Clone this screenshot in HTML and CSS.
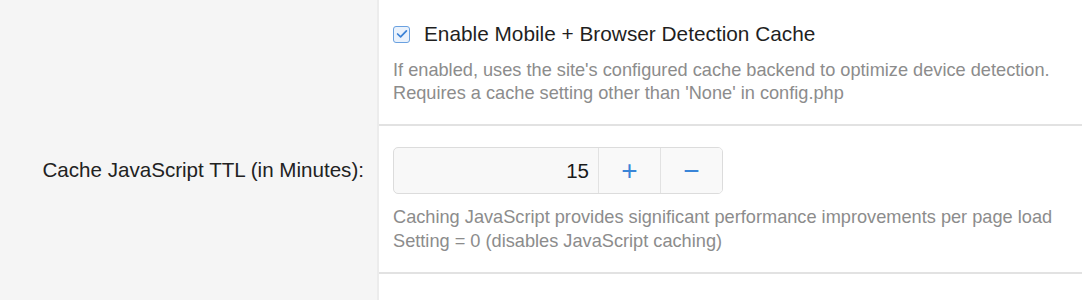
FILE: index.html
```html
<!DOCTYPE html>
<html>
<head>
<meta charset="utf-8">
<link rel="stylesheet" href="styles.css">
</head>
<body>
<div class="form">
  <div class="row row-first">
    <div class="label-cell"></div>
    <div class="field-cell">
      <label class="check">
        <span class="box"><svg width="12" height="10" viewBox="0 0 12 10"><path d="M1.6 5 L4.6 7.9 L10.4 1.8" fill="none" stroke="#3b82d6" stroke-width="1.7" stroke-linecap="round" stroke-linejoin="round"/></svg></span>
        <span class="check-text">Enable Mobile + Browser Detection Cache</span>
      </label>
      <p class="help">If enabled, uses the site's configured cache backend to optimize device detection.<br>Requires a cache setting other than 'None' in config.php</p>
    </div>
  </div>
  <div class="row row-second">
    <div class="label-cell"><span class="label">Cache JavaScript TTL (in Minutes):</span></div>
    <div class="field-cell">
      <div class="spinner">
        <div class="value">15</div>
        <div class="btn plus">+</div>
        <div class="btn minus">−</div>
      </div>
      <p class="help">Caching JavaScript provides significant performance improvements per page load<br>Setting = 0 (disables JavaScript caching)</p>
    </div>
  </div>
  <div class="row row-third">
    <div class="label-cell"></div>
    <div class="field-cell"></div>
  </div>
</div>
</body>
</html>
```
FILE: styles.css
```css
html, body {
  margin: 0;
  padding: 0;
  background: #ffffff;
  font-family: "Liberation Sans", Arial, Helvetica, sans-serif;
}
.form {
  width: 1082px;
  height: 300px;
  overflow: hidden;
}
.row {
  display: grid;
  grid-template-columns: 379px 1fr;
}
.label-cell {
  background: #f5f5f5;
  border-right: 2px solid #ececec;
  display: flex;
  justify-content: flex-end;
  padding-right: 13px;
}
.field-cell {
  border-bottom: 2px solid #e2e2e2;
  padding-left: 14px;
}
.row-first .field-cell {
  padding-top: 24px;
  height: 100px;
}
.row-second .field-cell {
  padding-top: 21px;
  height: 125px;
}
.row-third .label-cell,
.row-third .field-cell {
  height: 40px;
  border-bottom: none;
}
.check {
  display: flex;
  align-items: center;
  gap: 14px;
  height: 20px;
}
.box {
  width: 15px;
  height: 15px;
  border: 1.5px solid #6aa1e0;
  border-radius: 3px;
  background: #eaf2fc;
  display: flex;
  align-items: center;
  justify-content: center;
}
.check-text {
  font-size: 20.8px;
  color: #1f1f1f;
}
.help {
  margin: 15px 0 0;
  font-size: 18.2px;
  line-height: 23px;
  color: #8c8c8c;
}
.row-second .label-cell {
  padding-top: 32px;
}
.label {
  font-size: 20.6px;
  color: #222;
}
.spinner {
  display: flex;
  width: 328px;
  height: 45px;
  border: 1px solid #dcdcdc;
  border-radius: 5px;
  overflow: hidden;
  background: #f8f8f8;
}
.value {
  flex: 1;
  display: flex;
  align-items: center;
  justify-content: flex-end;
  padding-right: 9px;
  font-size: 20.5px;
  color: #1a1a1a;
}
.btn {
  width: 61px;
  border-left: 1px solid #e2e2e2;
  display: flex;
  align-items: center;
  justify-content: center;
  color: #3a85d8;
  font-size: 28px;
  background: #f9f9f9;
}
.row-second .help {
  margin-top: 11px;
  line-height: 24px;
}
```
